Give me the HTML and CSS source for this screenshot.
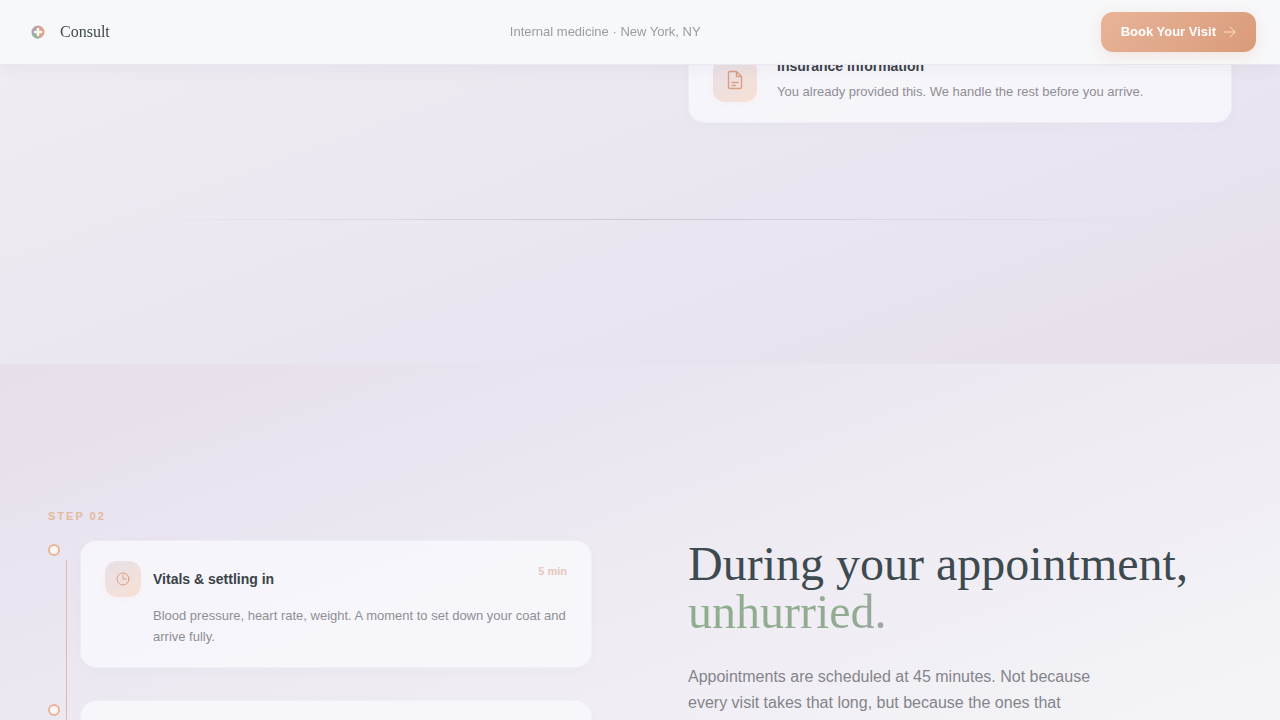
FILE: index.html
```
<!DOCTYPE html>
<html lang="en">
<head>
    <meta charset="UTF-8">
    <meta name="viewport" content="width=device-width, initial-scale=1.0">
    <title>Consult</title>
    <link rel="stylesheet" href="styles.css">
</head>
<body>
    <header class="site-header">
        <a class="brand" href="#">
            <svg class="brand-mark" viewBox="0 0 28 28" aria-hidden="true">
                <defs>
                    <linearGradient id="mark" x1="0" y1="0" x2="1" y2="0">
                        <stop offset="0" stop-color="#a9a3b8"/>
                        <stop offset="1" stop-color="#e8a583"/>
                    </linearGradient>
                </defs>
                <circle cx="14" cy="14" r="6.5" fill="url(#mark)"/>
                <path d="M7.8 16a6.5 6.5 0 0 0 7 4.4l-2-5z" fill="#8fb99a"/>
                <path d="M14 11v6M11 14h6" stroke="#fffdf5" stroke-width="2.4" stroke-linecap="round"/>
            </svg>
            <span>Consult</span>
        </a>
        <p class="practice">Internal medicine · New York, NY</p>
        <button class="book" type="button">
            Book Your Visit
            <svg viewBox="0 0 12 12" width="12" height="12" aria-hidden="true">
                <path d="M.5 6h10.500M6 1l5 5-5 5"/>
            </svg>
        </button>
    </header>

    <main>
        <section class="before">
            <div class="columns">
                <article class="card form-card">
                    <div class="icon icon-large">
                        <svg viewBox="0 0 20 20" width="20" height="20" aria-hidden="true">
                            <path d="M5 1.500h6.500l5 5v10.500a1.500 1.500 0 0 1-1.500 1.500H5A1.500 1.500 0 0 1 3.500 17V3A1.500 1.500 0 0 1 5 1.500zM11.500 1.500v5h5M7 12.500h6M7 15.500h3.500"/>
                        </svg>
                    </div>
                    <div>
                        <h3>Insurance information</h3>
                        <p>You already provided this. We handle the rest before you arrive.</p>
                    </div>
                </article>
            </div>
            <hr class="divider">
        </section>

        <section class="during">
            <div class="columns">
                <div>
                    <p class="step">Step 02</p>
                    <ol class="timeline">
                        <li>
                            <article class="card visit-card">
                                <div class="visit-head">
                                    <div class="icon">
                                        <svg viewBox="0 0 14 14" width="14" height="14" aria-hidden="true">
                                            <circle cx="7" cy="7" r="6"/>
                                            <path d="M7 3v4h3"/>
                                        </svg>
                                    </div>
                                    <h3>Vitals &amp; settling in</h3>
                                    <span class="time">5 min</span>
                                </div>
                                <p>Blood pressure, heart rate, weight. A moment to set down your coat and arrive fully.</p>
                            </article>
                        </li>
                        <li>
                            <article class="card visit-card"></article>
                        </li>
                    </ol>
                </div>
                <div class="intro">
                    <h2>During your appointment, <em>unhurried.</em></h2>
                    <p>Appointments are scheduled at 45 minutes. Not because every visit takes that long, but because the ones that</p>
                </div>
            </div>
        </section>
    </main>
</body>
</html>
```
FILE: styles.css
```
*,
*::before {
    box-sizing: border-box;
}

body {
    margin: 0;
    font-family: "Liberation Sans", Arial, sans-serif;
    color: #3a4247;
    background-color: #f5f4f8;
}

h2, h3, p, ol {
    margin: 0;
}

.site-header {
    position: fixed;
    top: 0;
    left: 0;
    right: 0;
    z-index: 10;
    display: flex;
    justify-content: space-between;
    align-items: center;
    padding: 12px 24px;
    background: rgba(247, 248, 250, 0.98);
    border-bottom: 1px solid rgba(232, 230, 238, 0.9);
    box-shadow: 0 4px 16px rgba(80, 70, 100, 0.05);
}

.brand {
    display: flex;
    align-items: center;
    gap: 8px;
    font-family: "Liberation Serif", "Times New Roman", serif;
    font-size: 16px;
    color: #3d4a4f;
    text-decoration: none;
}

.brand-mark {
    width: 28px;
    height: 28px;
}

.practice {
    font-size: 13px;
    line-height: 16px;
    color: #9c9ba0;
}

.book {
    display: flex;
    align-items: center;
    gap: 8px;
    height: 40px;
    padding: 0 20px;
    border: none;
    border-radius: 12px;
    background: linear-gradient(135deg, #e8b498, #d99b7a);
    box-shadow: 0 4px 16px rgba(232, 180, 152, 0.3);
    color: #fff;
    font-family: inherit;
    font-size: 13px;
    line-height: 16px;
    font-weight: bold;
    cursor: pointer;
}

.book svg {
    fill: none;
    stroke: #fbdfc8;
    stroke-linecap: round;
    stroke-linejoin: round;
}

.before {
    padding: 37px 0 144px;
    background: linear-gradient(160deg, #f0edf2 0, #edeaf2 150px, #eae7f0 380px, #e9e4f1 520px, #e8e2ed 640px, #e7dfe9 780px);
}

.during {
    padding: 144px 0 48px;
    background: linear-gradient(160deg, #e7dfea 0, #e8e1eb 90px, #e9e4f0 190px, #ebe8f1 320px, #efecf3 480px, #f2f1f6 640px, #f5f4f8 780px);
}

.columns {
    display: grid;
    grid-template-columns: 1fr 1fr;
    gap: 96px;
    padding: 0 48px;
}

.card {
    background: rgba(250, 249, 254, 0.75) padding-box;
    border: 1px solid rgba(250, 249, 254, 0.3);
    border-radius: 16px;
    padding: 20px 24px;
    box-shadow: 0 4px 16px rgba(80, 70, 100, 0.02);
}

.card h3 {
    font-size: 14px;
    line-height: 16px;
}

.card p {
    font-size: 13px;
    color: #908e95;
}

.form-card {
    grid-column: 2;
    display: flex;
    gap: 20px;
}

.form-card p {
    margin-top: 8px;
    line-height: 20px;
}

.icon {
    display: flex;
    flex-shrink: 0;
    align-items: center;
    justify-content: center;
    width: 36px;
    height: 36px;
    border-radius: 12px;
    background: linear-gradient(145deg, #e6e0e8, #f8e0d4);
    box-shadow: 0 2px 8px rgba(232, 180, 152, 0.06);
}

.icon-large {
    width: 44px;
    height: 44px;
}

.icon svg {
    fill: none;
    stroke: #dc9e84;
    stroke-linecap: round;
    stroke-linejoin: round;
}

.icon-large svg {
    stroke-width: 1.4;
}

.divider {
    height: 1px;
    margin: 96px 10% 0;
    border: none;
    background: linear-gradient(90deg, transparent, #cbc7d1, transparent);
}

.step {
    font-size: 11px;
    line-height: 16px;
    font-weight: bold;
    letter-spacing: 2px;
    text-transform: uppercase;
    color: #e3b99f;
}

.timeline {
    position: relative;
    display: grid;
    gap: 32px;
    margin-top: 16px;
    padding: 0;
    list-style: none;
}

.timeline::before {
    content: "";
    position: absolute;
    top: 20px;
    bottom: 0;
    left: 18px;
    width: 1px;
    background: #e3b9a5;
}

.timeline li {
    position: relative;
    padding-left: 32px;
}

.timeline li::before {
    content: "";
    position: absolute;
    top: 4px;
    left: 0;
    width: 12px;
    height: 12px;
    border: 2px solid #e8b498;
    border-radius: 50%;
    background: #fbf8f7;
}

.visit-card {
    min-height: 128px;
}

.visit-head {
    display: flex;
    align-items: center;
    gap: 12px;
}

.visit-card p {
    margin: 8px 0 0 48px;
    line-height: 21px;
}

.time {
    align-self: flex-start;
    margin-left: auto;
    font-size: 11px;
    line-height: 20px;
    font-weight: bold;
    color: #e6c8b8;
}

.intro {
    padding-top: 32px;
}

.intro h2 {
    font-family: "Liberation Serif", "Times New Roman", serif;
    font-size: 48px;
    line-height: 48px;
    font-weight: normal;
    color: #3d4a4f;
}

.intro em {
    display: block;
    width: fit-content;
    font-style: normal;
    color: transparent;
    background: linear-gradient(100deg, #8dae8c, #94aa93 85%, #a0a4a8);
    background-clip: text;
    -webkit-background-clip: text;
}

.intro p {
    max-width: 420px;
    margin-top: 28px;
    font-size: 16px;
    line-height: 26px;
    color: #84848a;
}
```
